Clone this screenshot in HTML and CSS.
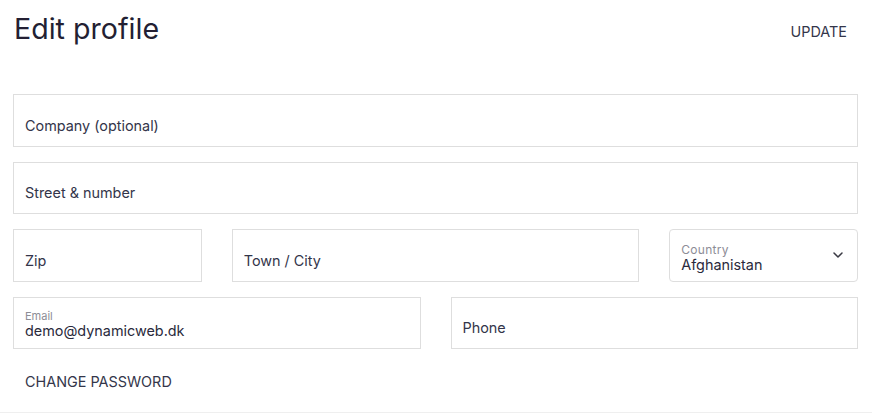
FILE: index.html
```html
<!DOCTYPE html>
<html lang="en">
<head>
<meta charset="utf-8">
<title>Edit profile</title>
<link rel="stylesheet" href="styles.css">
</head>
<body>
<div class="page">
  <header class="header">
    <h1 class="title">Edit profile</h1>
    <button class="text-btn update-btn" type="button">UPDATE</button>
  </header>
  <form class="form">
    <div class="field span-12"><span class="placeholder">Company (optional)</span></div>
    <div class="field span-12"><span class="placeholder">Street &amp; number</span></div>
    <div class="field span-3"><span class="placeholder">Zip</span></div>
    <div class="field span-6"><span class="placeholder">Town / City</span></div>
    <div class="field span-3 select">
      <span class="label label-country">Country</span>
      <span class="value">Afghanistan</span>
      <svg class="chevron" width="10" height="6" viewBox="0 0 10 6" aria-hidden="true"><path d="M1 1l4 4 4-4" fill="none" stroke="#3a3a44" stroke-width="1.5" stroke-linecap="round" stroke-linejoin="round"/></svg>
    </div>
    <div class="field span-6 filled">
      <span class="label">Email</span>
      <span class="value">demo@dynamicweb.dk</span>
    </div>
    <div class="field span-6"><span class="placeholder">Phone</span></div>
  </form>
  <div class="footer">
    <button class="text-btn pw-btn" type="button">CHANGE PASSWORD</button>
  </div>
</div>
</body>
</html>
```

FILE: styles.css
```css
* { box-sizing: border-box; }
html, body { margin: 0; padding: 0; background: #fff; }
body { font-family: Inter, "Noto Sans", sans-serif; color: #2b2b3a; }

.page { padding: 0 14px 0 13px; }

.header {
  display: flex;
  justify-content: space-between;
  align-items: flex-start;
  height: 47px;
}
.title {
  margin: 11px 0 0 1px;
  font-size: 28.6px;
  line-height: 36px;
  font-weight: 400;
  color: #231f33;
}
.text-btn {
  font-family: Inter, "Noto Sans", sans-serif;
  background: none;
  border: 0;
  padding: 12px;
  font-size: 14.4px;
  line-height: 20px;
  color: #34364a;
  cursor: pointer;
}
.update-btn { margin-top: 10px; margin-right: -1px; }

.form {
  margin-top: 47px;
  display: grid;
  grid-template-columns: repeat(12, 1fr);
  column-gap: 30px;
  row-gap: 15px;
}
.span-12 { grid-column: span 12; }
.span-6 { grid-column: span 6; }
.span-3 { grid-column: span 3; }

.field {
  position: relative;
  height: 52.5px;
  border: 1px solid #dedede;
  padding: 0 11px 10px;
  display: flex;
  flex-direction: column;
  justify-content: flex-end;
}
.placeholder {
  font-size: 14.4px;
  line-height: 20px;
  color: #33354a;
}
.filled { padding-bottom: 9px; }
.label {
  font-size: 11px;
  line-height: 10px;
  margin-bottom: 1px;
  color: #8d8d96;
}
.value {
  font-size: 14.4px;
  line-height: 17px;
  color: #2a2a3c;
}
.select {
  border-radius: 4px;
  padding-bottom: 8px;
}
.label-country {
  font-size: 12px;
  line-height: 12px;
  margin-bottom: 0;
  letter-spacing: 0.3px;
}
.chevron {
  position: absolute;
  right: 14px;
  top: 22px;
}

.footer {
  margin-top: 10.5px;
  padding-bottom: 8.5px;
  border-bottom: 1px solid #efefef;
  margin-left: -13px;
  margin-right: -14px;
  padding-left: 13px;
}
```
